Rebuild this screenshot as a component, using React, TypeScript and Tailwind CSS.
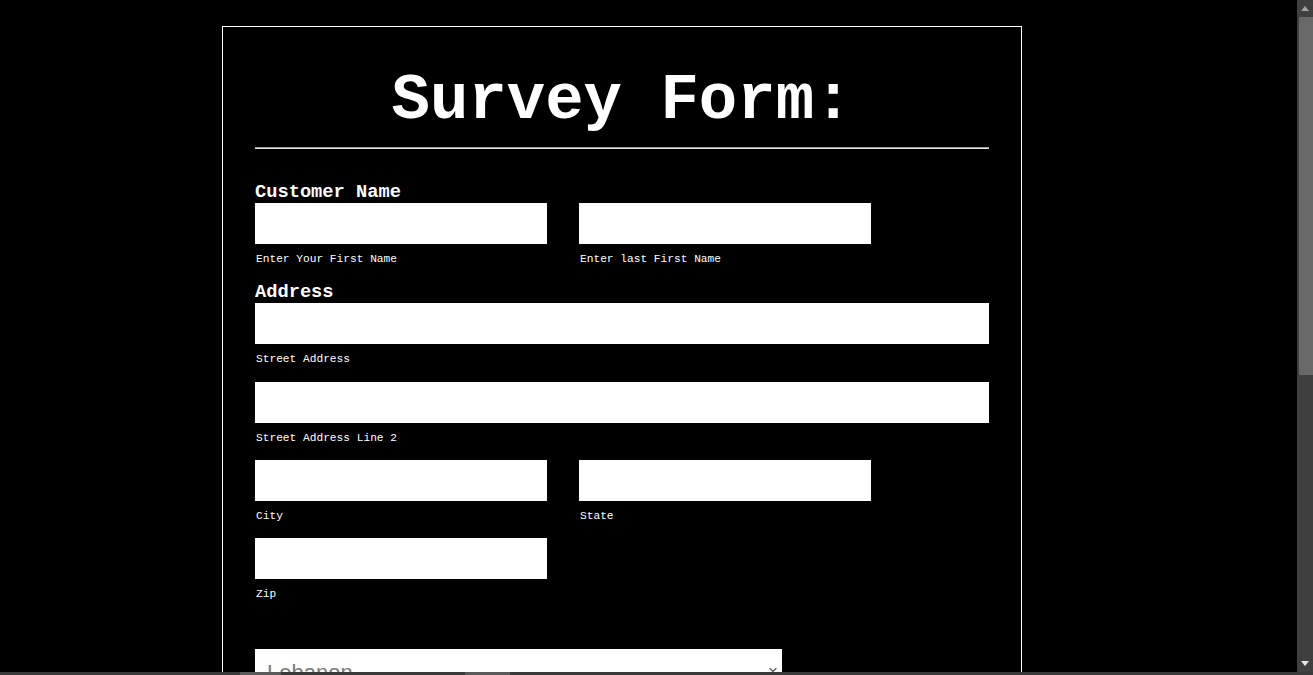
import { ChevronDown } from 'lucide-react';

const mono = "font-['Courier_New','Liberation_Mono',monospace]";

function Field({ label, className = 'w-[292px]' }: { label: string; className?: string }) {
  return (
    <div className={`flex flex-col ${className}`}>
      <input type="text" className="h-[41px] w-full bg-white text-black outline-none px-2" />
      <label className="mt-[7px] text-[11.2px] leading-[16px] pl-px">{label}</label>
    </div>
  );
}

// browser scrollbar look-alike (overlay on the right edge)
function FakeScrollbar() {
  return (
    <>
      <div className="fixed right-0 top-0 flex h-[672px] w-[16px] flex-col bg-[#3f3f3f]">
        <div className="flex h-[17px] items-center justify-center">
          <svg width="8" height="5" viewBox="0 0 8 5"><path d="M0 5 L4 0 L8 5 Z" fill="#a3a3a3" /></svg>
        </div>
        <div className="ml-[2px] h-[358px] bg-[#686868]" />
        <div className="flex-1" />
        <div className="flex h-[17px] items-center justify-center">
          <svg width="8" height="5" viewBox="0 0 8 5"><path d="M0 0 L8 0 L4 5 Z" fill="#e8e8e8" /></svg>
        </div>
      </div>
      <div className="fixed bottom-0 left-0 flex h-[3px] w-full bg-[#3a3a3a]">
        <div className="ml-[240px] w-[41px] bg-[#5a5a5a]" />
        <div className="ml-[184px] w-[45px] bg-[#5a5a5a]" />
      </div>
    </>
  );
}

export default function App() {
  return (
    <div className={`min-h-screen bg-black text-white ${mono}`}>
      <div className="pt-[26px] pb-10">
        <form className="ml-[222px] w-[800px] border border-white px-8 pt-[38px] pb-10">
          {/* Title */}
          <h1 className="text-center text-[64px] leading-[72px] font-bold">Survey Form:</h1>
          <div className="mt-[10px]">
            <div className="h-px bg-[#9b9b9b]" />
            <div className="h-px bg-[#e6e6e6]" />
          </div>

          {/* Customer name */}
          <h3 className="mt-8 text-[18.72px] leading-[22px] font-bold">Customer Name</h3>
          <div className="flex gap-8">
            <Field label="Enter Your First Name" />
            <Field label="Enter last First Name" />
          </div>

          {/* Address */}
          <h3 className="mt-[14px] text-[18.72px] leading-[22px] font-bold">Address</h3>
          <div className="flex flex-col gap-[14px]">
            <Field label="Street Address" className="w-full" />
            <Field label="Street Address Line 2" className="w-full mt-px" />
            <div className="flex gap-8">
              <Field label="City" />
              <Field label="State" />
            </div>
            <Field label="Zip" />
          </div>

          {/* Country */}
          <div className="relative mt-[47px] w-[527px]">
            <select
              defaultValue="Lebanon"
              className="h-[50px] w-full appearance-none bg-white pl-3 pb-1 text-[22px] text-[#7a7a7a] font-['Arial','Liberation_Sans',sans-serif] outline-none"
            >
              <option>Lebanon</option>
              <option>Syria</option>
              <option>Jordan</option>
            </select>
            <ChevronDown className="pointer-events-none absolute right-[3px] top-[15px] h-3 w-3 text-[#666]" strokeWidth={3} />
          </div>

          <h3 className="mt-8 text-[18.72px] leading-[22px] font-bold">Phone Number</h3>
          <Field label="Please enter a valid phone number" />

          <h3 className="mt-[14px] text-[18.72px] leading-[22px] font-bold">E-mail</h3>
          <Field label="example@example.com" />

          <h3 className="mt-[14px] text-[18.72px] leading-[22px] font-bold">Comments</h3>
          <textarea className="h-[120px] w-full bg-white text-black outline-none" />

          <button type="button" className="mt-6 border border-white px-6 py-2 text-[16px] font-bold">
            Submit
          </button>
        </form>
      </div>
      <FakeScrollbar />
    </div>
  );
}
